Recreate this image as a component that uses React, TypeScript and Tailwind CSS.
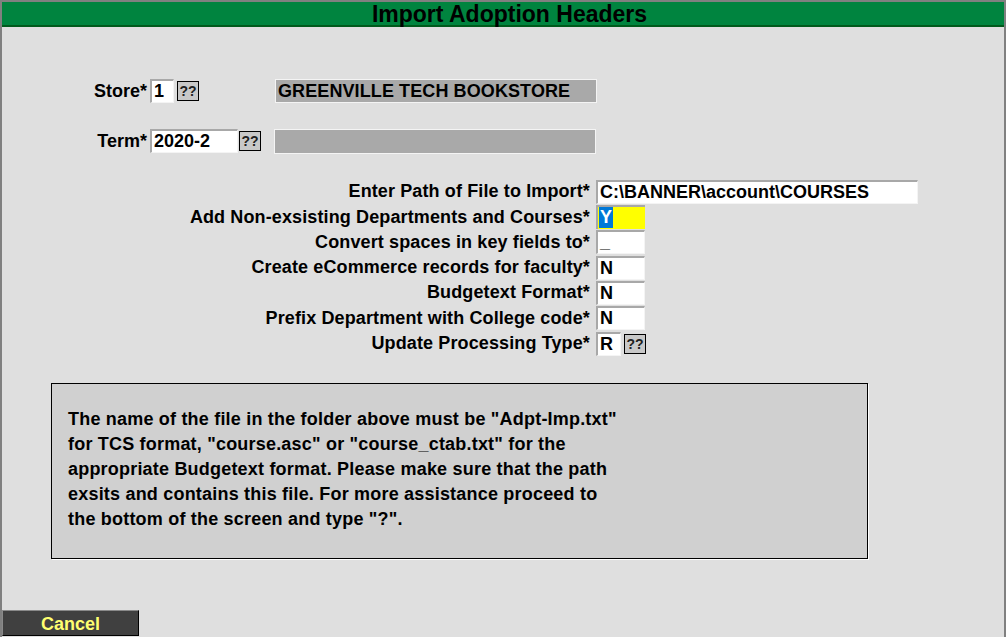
import React from "react";

const inputCls =
  "h-[24px] border-t-2 border-l-2 border-t-[#a8a8a8] border-l-[#a8a8a8] border-b border-r border-b-[#f4f4f4] border-r-[#f4f4f4] bg-white px-[2px] text-[18px] font-bold leading-[21px] text-black";

const HelpButton = () => (
  <span className="flex h-[20px] w-[22px] items-center justify-center border border-black bg-[#c8c8c8] text-[14px] font-bold leading-none tracking-normal text-[#202020]">
    ??
  </span>
);

const FormRow = ({
  label,
  children,
}: {
  label: string;
  children: React.ReactNode;
}) => (
  <div className="flex h-[25.33px] items-center">
    <div className="w-[588px] whitespace-nowrap text-right tracking-[0.12px]">{label}</div>
    <div className="ml-[6px] flex items-center">{children}</div>
  </div>
);

export default function App() {
  return (
    <div
      className="flex h-[637px] w-[1006px] flex-col border-l-2 border-t-2 border-r-2 border-[#808080] bg-[#dfdfdf] text-[18px] font-bold text-black"
      style={{ fontFamily: '"Liberation Sans", Arial, sans-serif' }}
    >
      {/* Title bar */}
      <div className="flex h-[25px] items-center justify-center border-b-2 border-[#005a1c] bg-[#00843f] pl-[13px]">
        <h1
          className="pt-[2px] text-[23px] font-bold leading-none text-black"
          style={{ fontFamily: '"Liberation Sans Narrow", "Arial Narrow", "Liberation Sans", sans-serif' }}
        >
          Import Adoption Headers
        </h1>
      </div>

      {/* Store / Term */}
      <div className="mt-[52px] flex flex-col gap-[26px]">
        <div className="flex h-[24px] items-center">
          <div className="w-[145px] whitespace-nowrap text-right">Store*</div>
          <div className={`${inputCls} ml-[3px] w-[24px]`}>1</div>
          <div className="ml-[3px]">
            <HelpButton />
          </div>
          <div className="ml-[76px] flex h-[24px] w-[322px] items-center border border-[#f4f4f4] bg-[#a9a9a9] px-[2px] tracking-[0.1px]">
            GREENVILLE TECH BOOKSTORE
          </div>
        </div>
        <div className="flex h-[24px] items-center">
          <div className="w-[145px] whitespace-nowrap text-right">Term*</div>
          <div className={`${inputCls} ml-[3px] w-[88px]`}>2020-2</div>
          <div className="ml-[1px]">
            <HelpButton />
          </div>
          <div className="ml-[13px] flex h-[25px] w-[322px] items-center border border-[#f4f4f4] bg-[#a9a9a9]" />
        </div>
      </div>

      {/* Import options */}
      <div className="mt-[26px] flex flex-col">
        <FormRow label="Enter Path of File to Import*">
          <div className={`${inputCls} w-[322px]`}>C:\BANNER\account\COURSES</div>
        </FormRow>
        <FormRow label="Add Non-exsisting Departments and Courses*">
          <div className="flex h-[24px] w-[49px] items-center border-t-2 border-l-2 border-[#a8a8a8] bg-[#ffff00] px-[1px]">
            <span className="bg-[#0078d7] px-[1px] leading-[21px] text-white">Y</span>
          </div>
        </FormRow>
        <FormRow label="Convert spaces in key fields to*">
          <div className={`${inputCls} w-[49px] leading-[20px]`}>_</div>
        </FormRow>
        <FormRow label="Create eCommerce records for faculty*">
          <div className={`${inputCls} w-[49px]`}>N</div>
        </FormRow>
        <FormRow label="Budgetext Format*">
          <div className={`${inputCls} w-[49px]`}>N</div>
        </FormRow>
        <FormRow label="Prefix Department with College code*">
          <div className={`${inputCls} w-[49px]`}>N</div>
        </FormRow>
        <FormRow label="Update Processing Type*">
          <div className={`${inputCls} w-[25px]`}>R</div>
          <div className="ml-[3px]">
            <HelpButton />
          </div>
        </FormRow>
      </div>

      {/* Info box */}
      <div className="ml-[49px] mt-[27px] w-[817px] border border-black bg-[#d0d0d0] px-[16px] pb-[26px] pt-[23px] leading-[25px] shadow-[1px_1px_0_#ffffff]">
        <p className="whitespace-nowrap tracking-[0.2px]">
          The name of the file in the folder above must be "Adpt-Imp.txt"
          <br />
          for TCS format, "course.asc" or "course_ctab.txt" for the
          <br />
          appropriate Budgetext format. Please make sure that the path
          <br />
          exsits and contains this file. For more assistance proceed to
          <br />
          the bottom of the screen and type "?".
        </p>
      </div>

      {/* Footer */}
      <div className="mt-auto flex pb-[1px]">
        <button className="h-[26px] w-[137px] border border-black border-t-[#8a8a8a] border-l-[#8a8a8a] bg-[#404040] text-[18px] font-bold text-[#ffff70]">
          Cancel
        </button>
      </div>
    </div>
  );
}
